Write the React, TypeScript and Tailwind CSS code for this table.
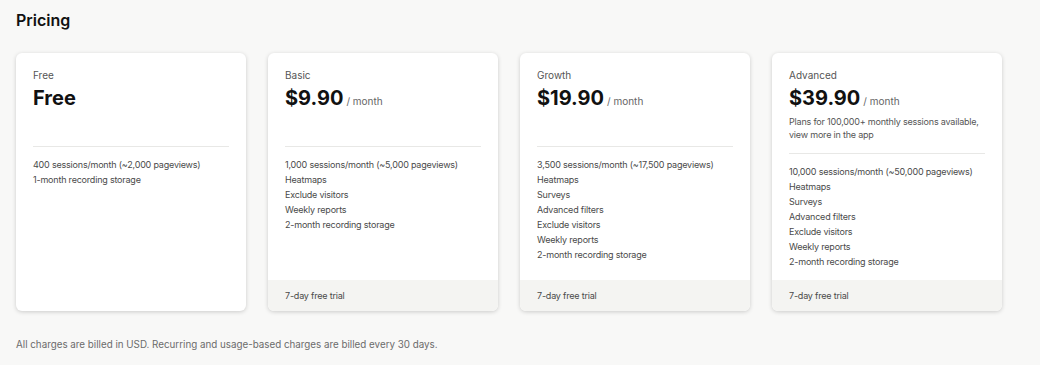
const plans = [
  {
    name: "Free",
    price: "Free",
    perMonth: false,
    note: "",
    features: ["400 sessions/month (~2,000 pageviews)", "1-month recording storage"],
    trial: false,
  },
  {
    name: "Basic",
    price: "$9.90",
    perMonth: true,
    note: "",
    features: [
      "1,000 sessions/month (~5,000 pageviews)",
      "Heatmaps",
      "Exclude visitors",
      "Weekly reports",
      "2-month recording storage",
    ],
    trial: true,
  },
  {
    name: "Growth",
    price: "$19.90",
    perMonth: true,
    note: "",
    features: [
      "3,500 sessions/month (~17,500 pageviews)",
      "Heatmaps",
      "Surveys",
      "Advanced filters",
      "Exclude visitors",
      "Weekly reports",
      "2-month recording storage",
    ],
    trial: true,
  },
  {
    name: "Advanced",
    price: "$39.90",
    perMonth: true,
    note: "Plans for 100,000+ monthly sessions available, view more in the app",
    features: [
      "10,000 sessions/month (~50,000 pageviews)",
      "Heatmaps",
      "Surveys",
      "Advanced filters",
      "Exclude visitors",
      "Weekly reports",
      "2-month recording storage",
    ],
    trial: true,
  },
];

const App = () => {
  return (
    <div className="min-h-[365px] bg-[#f8f8f7] px-4 pt-[9px] font-['Inter',sans-serif] text-[#111]">
      <h1 className="text-[16px] font-semibold leading-[22px]">Pricing</h1>
      <div className="mt-[22px] grid grid-cols-[repeat(4,230px)] gap-[22px]">
        {plans.map((p) => (
          <div key={p.name} className="flex h-[258px] flex-col overflow-hidden rounded-md bg-white shadow-[0_1px_4px_rgba(0,0,0,0.18)]">
            <div className="flex-1 px-[17px] pt-[15px]">
              <div className="min-h-[66px]">
                <p className="text-[10px] leading-[14px] text-[#555]">{p.name}</p>
                <div className="mt-[2px] flex items-baseline gap-[3px]">
                  <span className="text-[20px] font-bold leading-[28px]">{p.price}</span>
                  {p.perMonth && <span className="text-[10px] text-[#666]">/ month</span>}
                </div>
                {p.note && (
                  <p className="mt-[3px] text-[9px] leading-[13px] tracking-[-0.2px] text-[#555]">{p.note}</p>
                )}
              </div>
              <div className="mt-3 border-t border-[#e8e8e6]" />
              <ul className="mt-[10px] flex flex-col text-[9px] leading-[15px] tracking-[-0.2px] text-[#4a4a4a]">
                {p.features.map((f) => (
                  <li key={f}>{f}</li>
                ))}
              </ul>
            </div>
            {p.trial && (
              <div className="flex h-[31px] items-center bg-[#f4f4f2] px-[17px] text-[9px] tracking-[-0.2px] text-[#4a4a4a]">
                7-day free trial
              </div>
            )}
          </div>
        ))}
      </div>
      <p className="mt-[27px] text-[9.8px] text-[#6b6b6b]">
        All charges are billed in USD. Recurring and usage-based charges are billed every 30 days.
      </p>
    </div>
  );
};

export default App;
